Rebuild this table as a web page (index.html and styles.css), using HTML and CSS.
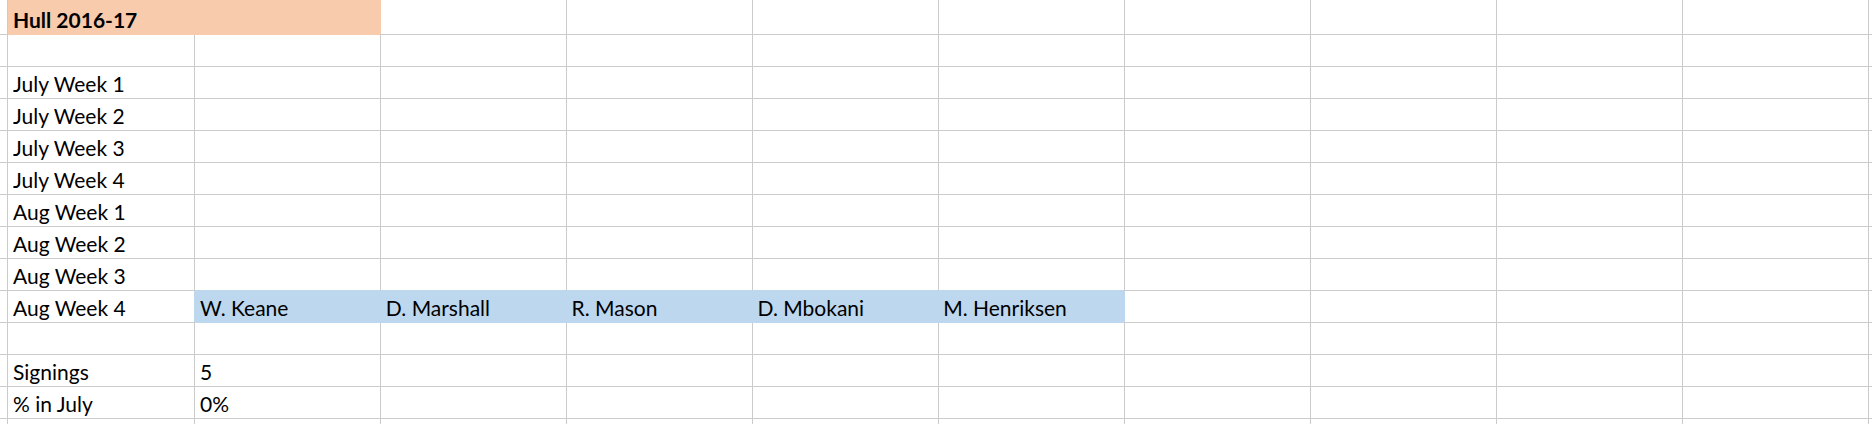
FILE: index.html
```html
<!DOCTYPE html>
<html>
<head>
<meta charset="utf-8">
<link rel="stylesheet" href="styles.css">
</head>
<body>
<div class="sheet">
  <!-- partial top row -->
  <div class="c"></div><div class="c peach-top span2"></div><div class="c"></div><div class="c"></div><div class="c"></div><div class="c"></div><div class="c"></div><div class="c"></div><div class="c"></div><div class="c"></div><div class="c"></div>

  <!-- row 1 -->
  <div class="c"></div><div class="c peach span2 bold">Hull 2016-17</div><div class="c"></div><div class="c"></div><div class="c"></div><div class="c"></div><div class="c"></div><div class="c"></div><div class="c"></div><div class="c"></div><div class="c"></div>

  <!-- row 2 -->
  <div class="c"></div><div class="c"></div><div class="c"></div><div class="c"></div><div class="c"></div><div class="c"></div><div class="c"></div><div class="c"></div><div class="c"></div><div class="c"></div><div class="c"></div><div class="c"></div>

  <div class="c"></div><div class="c">July Week 1</div><div class="c"></div><div class="c"></div><div class="c"></div><div class="c"></div><div class="c"></div><div class="c"></div><div class="c"></div><div class="c"></div><div class="c"></div><div class="c"></div>
  <div class="c"></div><div class="c">July Week 2</div><div class="c"></div><div class="c"></div><div class="c"></div><div class="c"></div><div class="c"></div><div class="c"></div><div class="c"></div><div class="c"></div><div class="c"></div><div class="c"></div>
  <div class="c"></div><div class="c">July Week 3</div><div class="c"></div><div class="c"></div><div class="c"></div><div class="c"></div><div class="c"></div><div class="c"></div><div class="c"></div><div class="c"></div><div class="c"></div><div class="c"></div>
  <div class="c"></div><div class="c">July Week 4</div><div class="c"></div><div class="c"></div><div class="c"></div><div class="c"></div><div class="c"></div><div class="c"></div><div class="c"></div><div class="c"></div><div class="c"></div><div class="c"></div>
  <div class="c"></div><div class="c">Aug Week 1</div><div class="c"></div><div class="c"></div><div class="c"></div><div class="c"></div><div class="c"></div><div class="c"></div><div class="c"></div><div class="c"></div><div class="c"></div><div class="c"></div>
  <div class="c"></div><div class="c">Aug Week 2</div><div class="c"></div><div class="c"></div><div class="c"></div><div class="c"></div><div class="c"></div><div class="c"></div><div class="c"></div><div class="c"></div><div class="c"></div><div class="c"></div>
  <div class="c"></div><div class="c">Aug Week 3</div><div class="c"></div><div class="c"></div><div class="c"></div><div class="c"></div><div class="c"></div><div class="c"></div><div class="c"></div><div class="c"></div><div class="c"></div><div class="c"></div>

  <div class="c"></div><div class="c">Aug Week 4</div>
  <div class="signings span5">
    <div class="name">W. Keane</div>
    <div class="name">D. Marshall</div>
    <div class="name">R. Mason</div>
    <div class="name">D. Mbokani</div>
    <div class="name">M. Henriksen</div>
  </div>
  <div class="c"></div><div class="c"></div><div class="c"></div><div class="c"></div><div class="c"></div>

  <div class="c"></div><div class="c"></div><div class="c"></div><div class="c"></div><div class="c"></div><div class="c"></div><div class="c"></div><div class="c"></div><div class="c"></div><div class="c"></div><div class="c"></div><div class="c"></div>

  <div class="c"></div><div class="c">Signings</div><div class="c">5</div><div class="c"></div><div class="c"></div><div class="c"></div><div class="c"></div><div class="c"></div><div class="c"></div><div class="c"></div><div class="c"></div><div class="c"></div>
  <div class="c"></div><div class="c">% in July</div><div class="c">0%</div><div class="c"></div><div class="c"></div><div class="c"></div><div class="c"></div><div class="c"></div><div class="c"></div><div class="c"></div><div class="c"></div><div class="c"></div>

  <!-- partial bottom row -->
  <div class="c"></div><div class="c"></div><div class="c"></div><div class="c"></div><div class="c"></div><div class="c"></div><div class="c"></div><div class="c"></div><div class="c"></div><div class="c"></div><div class="c"></div><div class="c"></div>
</div>
</body>
</html>
```

FILE: styles.css
```css
html, body {
  margin: 0;
  padding: 0;
  background: #ffffff;
}

body {
  font-family: Lato, "Open Sans", sans-serif;
  font-size: 21px;
  color: #000000;
  overflow: hidden;
}

.sheet {
  display: grid;
  width: 1872px;
  height: 424px;
  grid-template-columns: 7px 186px repeat(9, 185px) 1fr;
  grid-template-rows: 2px repeat(13, 31px) 1fr;
  gap: 1px;
  background: #cbcbcb;
  overflow: hidden;
}

.c {
  background: #ffffff;
  display: flex;
  align-items: flex-end;
  padding: 0 0 3px 5px;
  line-height: 22px;
  white-space: nowrap;
  overflow: hidden;
  min-width: 0;
}

.span2 { grid-column: span 2; }
.span5 { grid-column: span 5; }

.bold { font-weight: 700; }

.peach-top {
  background: #f8cbad;
  box-shadow: 0 1px 0 #f8cbad, 1px 0 0 #f8cbad;
}

.peach {
  background: #f8cbad;
  box-shadow: 1px 0 0 #f8cbad, 0 1px 0 #f8cbad;
}

.signings {
  display: grid;
  grid-template-columns: repeat(5, 1fr);
  background: #bdd7ee;
  box-shadow: -1px 0 0 #bdd7ee, 1px 0 0 #bdd7ee, 0 -1px 0 #bdd7ee, 0 1px 0 #bdd7ee;
}

.name {
  display: flex;
  align-items: flex-end;
  padding: 0 0 3px 5px;
  line-height: 22px;
  white-space: nowrap;
}
```
